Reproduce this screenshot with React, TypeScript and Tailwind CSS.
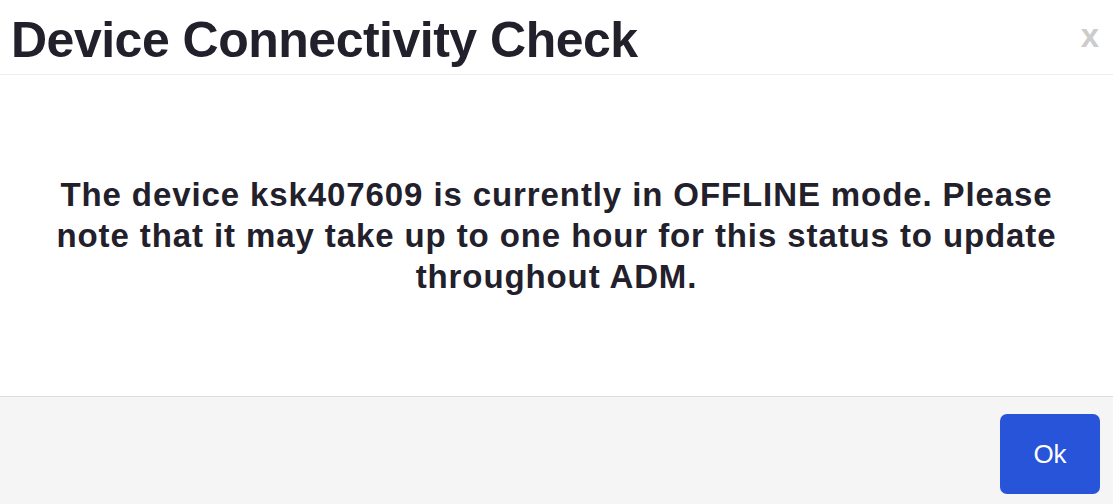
export default function App() {
  return (
    <div
      className="flex h-[504px] w-full flex-col bg-white text-[#22202b]"
      style={{ fontFamily: "'Liberation Sans', Arial, Helvetica, sans-serif" }}
    >
      {/* header */}
      <div className="flex h-[75px] shrink-0 items-start justify-between border-b border-[#eeeeee] pl-[11px] pr-[14px]">
        <h1 className="mt-[11px] text-[50px] leading-[58px] font-bold tracking-[-0.5px]">
          Device Connectivity Check
        </h1>
        <button type="button" className="mt-[18px] text-[33px] leading-[36px] font-bold text-[#cccccc]">
          x
        </button>
      </div>

      {/* body */}
      <div className="flex h-[321px] shrink-0 items-center justify-center px-6">
        <p className="mt-[-1px] max-w-[1024px] text-center text-[33px] leading-[41px] font-bold tracking-[0.9px]">
          The device ksk407609 is currently in OFFLINE mode. Please note that it may take up to one hour for this
          status to update throughout ADM.
        </p>
      </div>

      {/* footer */}
      <div className="flex flex-1 items-start justify-end border-t border-[#dddddd] bg-[#f5f5f5] pt-[17px] pr-[13px]">
        <button
          type="button"
          className="flex h-[80px] w-[100px] items-center justify-center rounded-[7px] bg-[#2754d9] text-[26px] text-white"
          style={{ fontFamily: "'Liberation Sans', Arial, sans-serif" }}
        >
          Ok
        </button>
      </div>
    </div>
  );
}
